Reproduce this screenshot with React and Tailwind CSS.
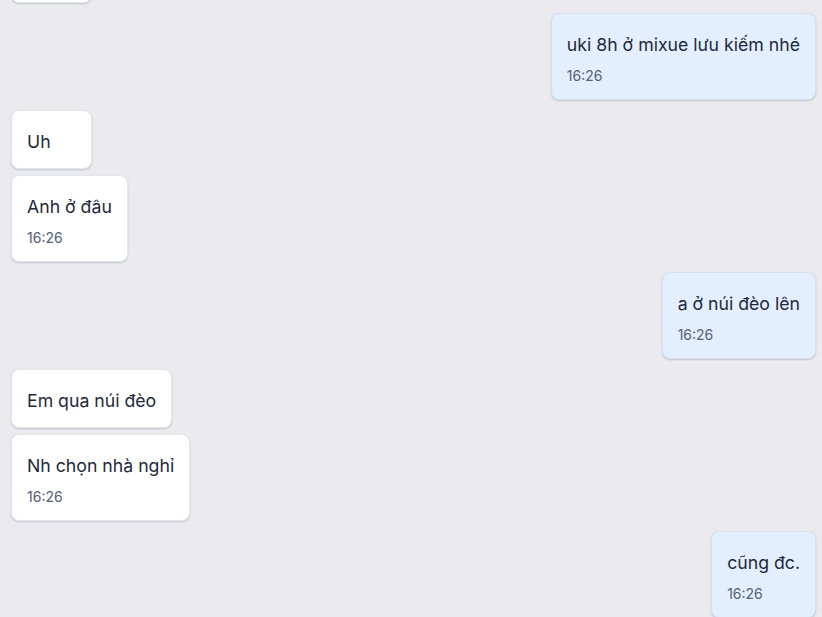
import React from "react";

const groups = [
  { side: "left", msgs: [{ text: "\u00a0" }] },
  { side: "right", msgs: [{ text: "uki 8h ở mixue lưu kiếm nhé", time: "16:26" }] },
  { side: "left", msgs: [{ text: "Uh" }, { text: "Anh ở đâu", time: "16:26" }] },
  { side: "right", msgs: [{ text: "a ở núi đèo lên", time: "16:26" }] },
  { side: "left", msgs: [{ text: "Em qua núi đèo" }, { text: "Nh chọn nhà nghỉ", time: "16:26" }] },
  { side: "right", msgs: [{ text: "cũng đc.", time: "16:26" }] },
];

function Bubble({ side, text, time }) {
  const base =
    "min-w-[81px] rounded-lg px-[15px] pt-[17px] pb-[13px] shadow-[0_1px_2px_rgba(15,23,42,0.18)] text-[#1e293b]";
  const color =
    side === "right"
      ? "bg-[#e3efff] border border-[#d6e0ee]"
      : "bg-white border border-[#e4e6ea]";
  return (
    <div className={`${base} ${color}`}>
      <div className="text-[17.7px] leading-[27px] whitespace-nowrap">{text}</div>
      {time && <div className="mt-2 text-[14px] leading-[20px] text-[#536076]">{time}</div>}
    </div>
  );
}

export default function App() {
  return (
    <div
      className="h-[617px] w-[822px] overflow-hidden bg-[#ebebef] pl-[11px] pr-[6px]"
      style={{ fontFamily: "Inter, 'Noto Sans', sans-serif" }}
    >
      <div className="flex flex-col gap-[10px] mt-[-56px]">
        {groups.map((g, i) => (
          <div
            key={i}
            className={`flex flex-col gap-[6px] ${g.side === "right" ? "items-end" : "items-start"}`}
          >
            {g.msgs.map((m, j) => (
              <Bubble key={j} side={g.side} text={m.text} time={m.time} />
            ))}
          </div>
        ))}
      </div>
    </div>
  );
}
